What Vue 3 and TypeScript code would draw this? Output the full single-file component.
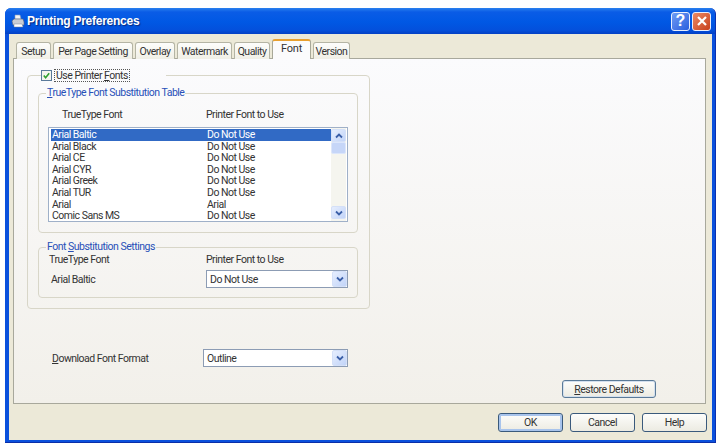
<script setup lang="ts">
const tabs = [
  { label: 'Setup', width: 35 },
  { label: 'Per Page Setting', width: 80 },
  { label: 'Overlay', width: 40 },
  { label: 'Watermark', width: 55 },
  { label: 'Quality', width: 36 },
  { label: 'Font', width: 39 },
  { label: 'Version', width: 37 },
]

const fonts = [
  { name: 'Arial Baltic', use: 'Do Not Use' },
  { name: 'Arial Black', use: 'Do Not Use' },
  { name: 'Arial CE', use: 'Do Not Use' },
  { name: 'Arial CYR', use: 'Do Not Use' },
  { name: 'Arial Greek', use: 'Do Not Use' },
  { name: 'Arial TUR', use: 'Do Not Use' },
  { name: 'Arial', use: 'Arial' },
  { name: 'Comic Sans MS', use: 'Do Not Use' },
]
</script>

<template>
  <div class="window">
    <header class="titlebar">
      <svg class="titlebar__icon" viewBox="0 0 14 14">
        <path d="M4 1h5l1 4H4z" fill="#f4f4f4" stroke="#8a9ab8" stroke-width=".6" />
        <path d="M1 7l2-2h9l1 3v3H2z" fill="#c8ccd4" stroke="#5c6478" stroke-width=".6" />
        <path d="M3 10h8l1 3H3z" fill="#ffffff" stroke="#7a8498" stroke-width=".5" />
      </svg>
      <span class="titlebar__title">Printing Preferences</span>
      <button class="capbtn capbtn--help">?</button>
      <button class="capbtn capbtn--close">
        <svg viewBox="0 0 12 12" width="12" height="12">
          <path d="M2 2l8 8M10 2l-8 8" stroke="#fff" stroke-width="2.2" fill="none" />
        </svg>
      </button>
    </header>

    <div class="body">
      <nav class="tabs">
        <span
          v-for="tab in tabs"
          :key="tab.label"
          class="tab"
          :class="{ 'tab--active': tab.label === 'Font' }"
          :style="{ width: tab.width + 'px' }"
        >{{ tab.label }}</span>
      </nav>

      <section class="page">
        <fieldset class="group group--outer">
          <legend class="group__check">
            <span class="checkbox">
              <svg viewBox="0 0 10 10" width="9" height="9">
                <path d="M2 5l2 2.4L8 2.6" stroke="#2fa02f" stroke-width="1.8" fill="none" />
              </svg>
            </span>
            <span class="group__checklabel">Use Printer <u>F</u>onts</span>
          </legend>

          <fieldset class="group group--table">
            <legend class="group__legend"><u>T</u>rueType Font Substitution Table</legend>
            <div class="cols cols--head">
              <span class="cols__name">TrueType Font</span>
              <span>Printer Font to Use</span>
            </div>
            <div class="list">
              <ul class="list__rows">
                <li
                  v-for="(font, i) in fonts"
                  :key="font.name"
                  class="list__row"
                  :class="{ 'list__row--selected': i === 0 }"
                >
                  <span class="list__name">{{ font.name }}</span>
                  <span>{{ font.use }}</span>
                </li>
              </ul>
              <div class="scroll">
                <span class="scroll__btn">
                  <svg viewBox="0 0 10 8" width="10" height="8">
                    <path d="M2 5.5l3-3 3 3" stroke="#3a5fa8" stroke-width="1.8" fill="none" />
                  </svg>
                </span>
                <span class="scroll__thumb"></span>
                <span class="scroll__btn scroll__btn--down">
                  <svg viewBox="0 0 10 8" width="10" height="8">
                    <path d="M2 2.5l3 3 3-3" stroke="#3a5fa8" stroke-width="1.8" fill="none" />
                  </svg>
                </span>
              </div>
            </div>
          </fieldset>

          <fieldset class="group group--settings">
            <legend class="group__legend">Font <u>S</u>ubstitution Settings</legend>
            <div class="cols">
              <span class="cols__type">TrueType Font</span>
              <span>Printer Font to Use</span>
            </div>
            <div class="cols cols--select">
              <span class="cols__current">Arial Baltic</span>
              <div class="select">
                <span class="select__value">Do Not Use</span>
                <span class="select__btn">
                  <svg viewBox="0 0 10 8" width="10" height="8">
                    <path d="M2 2.5l3 3 3-3" stroke="#3a5fa8" stroke-width="1.8" fill="none" />
                  </svg>
                </span>
              </div>
            </div>
          </fieldset>
        </fieldset>

        <div class="download">
          <span class="download__label"><u>D</u>ownload Font Format</span>
          <div class="select">
            <span class="select__value">Outline</span>
            <span class="select__btn">
              <svg viewBox="0 0 10 8" width="10" height="8">
                <path d="M2 2.5l3 3 3-3" stroke="#3a5fa8" stroke-width="1.8" fill="none" />
              </svg>
            </span>
          </div>
        </div>

        <div class="restore">
          <button class="btn btn--restore"><u>R</u>estore Defaults</button>
        </div>
      </section>

      <footer class="footer">
        <button class="btn btn--default">OK</button>
        <button class="btn">Cancel</button>
        <button class="btn">Help</button>
      </footer>
    </div>
  </div>
</template>

<style>
html,
body {
  margin: 0;
  background: #fff;
}
</style>

<style scoped>
.window {
  box-sizing: border-box;
  width: 711px;
  height: 435px;
  margin: 8px 0 0 5px;
  display: flex;
  flex-direction: column;
  border-radius: 6px 6px 0 0;
  overflow: hidden;
  background: #0a50dc;
  border-right: 1px solid #0a2fb0;
  border-bottom: 1px solid #0a2fa8;
  font-family: Roboto, 'Liberation Sans', sans-serif;
  font-size: 10.5px;
  letter-spacing: -0.5px;
  color: #333;
}

.titlebar {
  height: 26px;
  flex: none;
  display: flex;
  align-items: center;
  padding: 0 4px 0 6px;
  background: linear-gradient(#2a80ee 0, #0a5ce6 4px, #0058e4 14px, #0350dc 22px, #0340c4 26px);
}
.titlebar__icon {
  width: 14px;
  height: 14px;
}
.titlebar__title {
  margin-left: 2px;
  font-family: 'Liberation Sans', sans-serif;
  font-size: 12px;
  font-weight: 700;
  letter-spacing: -0.25px;
  color: #fff;
  text-shadow: 1px 1px 1px #0a2a80;
}

.capbtn {
  width: 19px;
  height: 19px;
  padding: 0;
  margin-left: 2px;
  display: flex;
  align-items: center;
  justify-content: center;
  border: 1px solid #e8eefc;
  border-radius: 3px;
  font: 700 16px 'Liberation Sans', sans-serif;
  color: #fff;
}
.capbtn--help {
  margin-left: auto;
  background: linear-gradient(135deg, #6f9cf4, #2a5ede);
}
.capbtn--close {
  background: linear-gradient(135deg, #ea8a66, #c8401c);
}

.body {
  flex: 1;
  min-height: 0;
  margin: 0 3px 2px 4px;
  display: flex;
  flex-direction: column;
  background: #ece9d8;
}

.tabs {
  height: 24px;
  flex: none;
  display: flex;
  align-items: flex-end;
  padding-left: 7px;
  gap: 2px;
}
.tab {
  box-sizing: border-box;
  height: 17px;
  display: flex;
  align-items: center;
  justify-content: center;
  border: 1px solid #b4b4a4;
  border-bottom: none;
  border-radius: 3px 3px 0 0;
  background: linear-gradient(#fdfdfb, #f0efe6);
  position: relative;
  top: 1px;
}
.tab--active {
  height: 20px;
  background: #fbfbfc;
  border-color: #a8a898;
  border-top: 2px solid #e8a030;
  font-size: 11px;
  letter-spacing: -0.2px;
  padding-bottom: 3px;
  z-index: 1;
}

.page {
  flex: 1;
  min-height: 0;
  margin: 0 6px 0 4px;
  display: flex;
  flex-direction: column;
  background: linear-gradient(#fbfbfd, #f2f0ea);
  border: 1px solid #a8a89c;
}

.group {
  box-sizing: border-box;
  margin: 0;
  min-width: 0;
  border: 1px solid #d8d6c8;
  border-radius: 4px;
}
.group--outer {
  width: 343px;
  height: 240px;
  margin: 10px 0 0 13px;
  padding: 0 10px;
}
.group--table {
  width: 320px;
  height: 146px;
  margin-top: 5px;
  padding: 0 9px;
}
.group--settings {
  width: 320px;
  height: 57px;
  margin-top: 8px;
  padding: 0 9px;
}
.group__check {
  display: flex;
  align-items: center;
  padding: 0 37px 0 0;
  margin-left: 3px;
  height: 13px;
}
.group__checklabel {
  margin-left: 3px;
  padding: 0 1px;
  outline: 1px dotted #555;
  line-height: 11px;
}
.group__legend {
  margin-left: -2px;
  padding: 0 1px;
  color: #2850b8;
  line-height: 12px;
}

.checkbox {
  box-sizing: border-box;
  width: 11px;
  height: 11px;
  display: flex;
  align-items: center;
  justify-content: center;
  border: 1px solid #5a7a9a;
  background: #f4f4ee;
}

.cols {
  display: flex;
  height: 13px;
  align-items: center;
}
.cols > :first-child {
  width: 158px;
  flex: none;
}
.cols--head {
  margin-top: 9px;
}
.cols__name {
  padding-left: 14px;
  box-sizing: border-box;
}
.cols__type {
  padding-left: 1px;
  box-sizing: border-box;
}
.cols--select {
  height: 18px;
  margin-top: 4px;
}
.cols__current {
  padding-left: 3px;
  box-sizing: border-box;
}

.list {
  box-sizing: border-box;
  width: 300px;
  height: 95px;
  margin-top: 6px;
  display: flex;
  padding: 0 1px;
  background: #fff;
  border: 1px solid #9fb0c8;
}
.list__rows {
  flex: 1;
  margin: 0;
  padding: 1px 0 0 1px;
  list-style: none;
}
.list__row {
  height: 11.6px;
  line-height: 11.6px;
  display: flex;
  padding-left: 1px;
}
.list__name {
  width: 155px;
  flex: none;
}
.list__row--selected {
  background: #316ac5;
  color: #fff;
}

.scroll {
  width: 15px;
  flex: none;
  display: flex;
  flex-direction: column;
  padding: 1px 0 2px;
  background: #f5f5ef;
}
.scroll__btn,
.select__btn {
  display: flex;
  align-items: center;
  justify-content: center;
  background: linear-gradient(135deg, #e6eefe, #c2d4f8);
  border: 1px solid #d4e0f8;
  border-radius: 2px;
  box-sizing: border-box;
}
.scroll__btn {
  height: 13px;
}
.scroll__btn--down {
  margin-top: auto;
}
.scroll__thumb {
  height: 12px;
  background: #c6d6f8;
  border: 1px solid #dce6fb;
  border-radius: 2px;
  box-sizing: border-box;
}

.select {
  box-sizing: border-box;
  width: 145px;
  height: 18px;
  display: flex;
  align-items: center;
  background: #fff;
  border: 1px solid #8c9cb4;
}
.select__value {
  flex: 1;
  padding-left: 3px;
}
.select__btn {
  width: 15px;
  height: 16px;
}

.download {
  display: flex;
  align-items: center;
  margin: 40px 0 0 38px;
}
.download__label {
  width: 151px;
  flex: none;
}

.restore {
  margin-top: auto;
  padding: 0 49px 5px 0;
  display: flex;
  justify-content: flex-end;
}

.btn {
  box-sizing: border-box;
  width: 65px;
  height: 19px;
  padding: 0;
  font: inherit;
  letter-spacing: inherit;
  color: #333;
  background: linear-gradient(#fdfdfb, #ecebe2);
  border: 1px solid #3a5a7c;
  border-radius: 3px;
}
.btn--restore {
  width: 94px;
  height: 18px;
  border-color: #5a7a98;
  box-shadow: inset 0 0 0 1px #d4e0ee;
}
.btn--default {
  box-shadow: inset 0 0 0 2px #a8c4ec;
}

.footer {
  box-sizing: border-box;
  height: 36px;
  flex: none;
  display: flex;
  justify-content: flex-end;
  align-items: flex-start;
  gap: 7px;
  padding: 9px 5px 0 0;
}
</style>
